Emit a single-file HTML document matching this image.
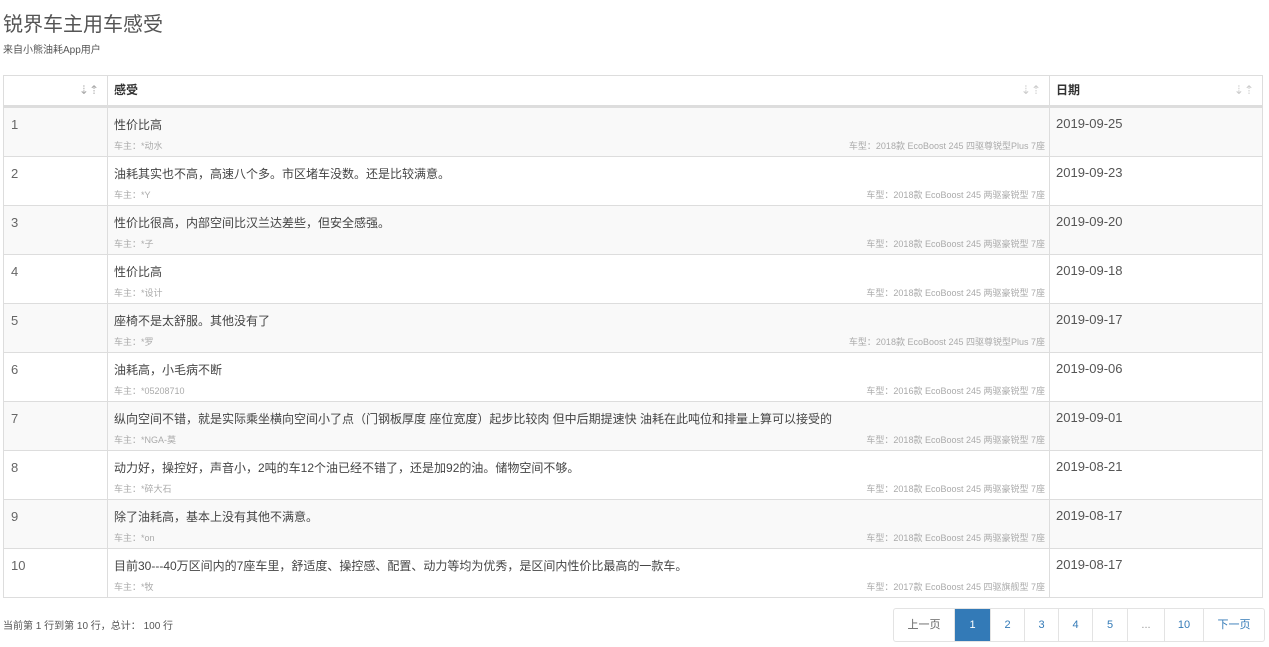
<!DOCTYPE html>
<html><head><meta charset="utf-8"><style>
body{margin:0;background:#fff;font-family:"Liberation Sans","Noto Sans CJK SC",sans-serif;color:#333;width:1269px;height:647px;overflow:hidden;position:relative}
h1{position:absolute;left:3px;top:8px;margin:0;font-size:20px;font-weight:normal;color:#555}
.sub{position:absolute;left:3px;top:41px;font-size:10px;color:#555}
table{position:absolute;left:3px;top:75px;width:1260px;border-collapse:collapse;font-size:12px;table-layout:fixed}
td,th{border:1px solid #ddd;vertical-align:top;padding:0}
th{height:29px;font-weight:bold;text-align:left;border-bottom:3px solid #ddd;position:relative;font-size:12px;line-height:29px}
tr.r td{height:48px}
tr.r:nth-child(even) td{background:#f9f9f9}
.c1{width:103px}.c3{width:206px}
.b{height:48px;position:relative;overflow:hidden}
.n{padding:9px 0 0 7px;font-size:13px;color:#666;box-sizing:border-box}
.t{padding:9px 0 0 6px;color:#444;box-sizing:border-box;line-height:16px}
.o{position:absolute;left:6px;bottom:4px;font-size:9px;color:#aaa;line-height:12px}
.m{position:absolute;right:4px;bottom:4px;font-size:9px;color:#aaa;line-height:12px}
.d{padding:8px 0 0 6px;font-size:13px;color:#555;box-sizing:border-box}
.s{position:absolute;right:8px;top:0;color:#ccc;font-weight:normal}
.info{position:absolute;left:3px;top:617px;font-size:10px;color:#555}
.pg{position:absolute;left:893px;top:608px;height:32px;display:flex;border:1px solid #e3e3e3;border-radius:3px;font-size:11px;background:#fff}
.pg span{display:block;height:32px;line-height:32px;text-align:center;color:#337ab7;border-left:1px solid #e3e3e3}
.pg span:first-child{border-left:0;color:#666}
.pg .a{background:#337ab7;color:#fff}
</style></head><body>
<h1>锐界车主用车感受</h1>
<div class="sub">来自小熊油耗App用户</div>
<table>
<tr><th class="c1"><span class="s" style="color:#aaa">⇣⇡</span></th><th style="padding-left:6px">感受<span class="s">⇣⇡</span></th><th class="c3" style="padding-left:6px">日期<span class="s">⇣⇡</span></th></tr>
<tr class="r"><td><div class="b n">1</div></td><td><div class="b t">性价比高<div class="o">车主：*动水</div><div class="m">车型：2018款 EcoBoost 245 四驱尊锐型Plus 7座</div></div></td><td><div class="b d">2019-09-25</div></td></tr>
<tr class="r"><td><div class="b n">2</div></td><td><div class="b t">油耗其实也不高，高速八个多。市区堵车没数。还是比较满意。<div class="o">车主：*Y</div><div class="m">车型：2018款 EcoBoost 245 两驱豪锐型 7座</div></div></td><td><div class="b d">2019-09-23</div></td></tr>
<tr class="r"><td><div class="b n">3</div></td><td><div class="b t">性价比很高，内部空间比汉兰达差些，但安全感强。<div class="o">车主：*子</div><div class="m">车型：2018款 EcoBoost 245 两驱豪锐型 7座</div></div></td><td><div class="b d">2019-09-20</div></td></tr>
<tr class="r"><td><div class="b n">4</div></td><td><div class="b t">性价比高<div class="o">车主：*设计</div><div class="m">车型：2018款 EcoBoost 245 两驱豪锐型 7座</div></div></td><td><div class="b d">2019-09-18</div></td></tr>
<tr class="r"><td><div class="b n">5</div></td><td><div class="b t">座椅不是太舒服。其他没有了<div class="o">车主：*罗</div><div class="m">车型：2018款 EcoBoost 245 四驱尊锐型Plus 7座</div></div></td><td><div class="b d">2019-09-17</div></td></tr>
<tr class="r"><td><div class="b n">6</div></td><td><div class="b t">油耗高，小毛病不断<div class="o">车主：*05208710</div><div class="m">车型：2016款 EcoBoost 245 两驱豪锐型 7座</div></div></td><td><div class="b d">2019-09-06</div></td></tr>
<tr class="r"><td><div class="b n">7</div></td><td><div class="b t">纵向空间不错，就是实际乘坐横向空间小了点（门钢板厚度 座位宽度）起步比较肉 但中后期提速快 油耗在此吨位和排量上算可以接受的<div class="o">车主：*NGA-莫</div><div class="m">车型：2018款 EcoBoost 245 两驱豪锐型 7座</div></div></td><td><div class="b d">2019-09-01</div></td></tr>
<tr class="r"><td><div class="b n">8</div></td><td><div class="b t">动力好，操控好，声音小，2吨的车12个油已经不错了，还是加92的油。储物空间不够。<div class="o">车主：*碎大石</div><div class="m">车型：2018款 EcoBoost 245 两驱豪锐型 7座</div></div></td><td><div class="b d">2019-08-21</div></td></tr>
<tr class="r"><td><div class="b n">9</div></td><td><div class="b t">除了油耗高，基本上没有其他不满意。<div class="o">车主：*on</div><div class="m">车型：2018款 EcoBoost 245 两驱豪锐型 7座</div></div></td><td><div class="b d">2019-08-17</div></td></tr>
<tr class="r"><td><div class="b n">10</div></td><td><div class="b t">目前30---40万区间内的7座车里，舒适度、操控感、配置、动力等均为优秀，是区间内性价比最高的一款车。<div class="o">车主：*牧</div><div class="m">车型：2017款 EcoBoost 245 四驱旗舰型 7座</div></div></td><td><div class="b d">2019-08-17</div></td></tr>
</table>
<div class="info">当前第 1 行到第 10 行，总计： 100 行</div>
<div class="pg"><span style="width:60px">上一页</span><span class="a" style="width:35px">1</span><span style="width:33px">2</span><span style="width:33px">3</span><span style="width:33px">4</span><span style="width:34px">5</span><span style="width:36px;color:#999">...</span><span style="width:38px">10</span><span style="width:60px">下一页</span></div>
</body></html>
